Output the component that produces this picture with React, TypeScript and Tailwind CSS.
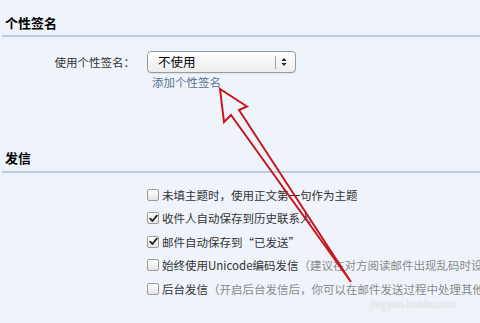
import React from "react";

const font = { fontFamily: '"Noto Sans CJK SC", "Noto Sans", sans-serif' };

function Check({ checked }: { checked?: boolean }) {
  return (
    <span className="w-[12px] h-[12px] rounded-[2px] border border-[#9c9c9c] bg-gradient-to-b from-white to-[#e4e4e4] flex items-center justify-center shrink-0">
      {checked && (
        <svg width="9" height="9" viewBox="0 0 9 9">
          <path d="M1.2 4.6 L3.4 7 L7.8 1.6" stroke="#222" strokeWidth="1.8" fill="none" strokeLinecap="round" strokeLinejoin="round" />
        </svg>
      )}
    </span>
  );
}

function Row({ checked, children }: { checked?: boolean; children: React.ReactNode }) {
  return (
    <div className="h-[23.5px] flex items-center pl-[147px] whitespace-nowrap">
      <Check checked={checked} />
      <span className="ml-[3px] text-[11.5px] leading-[16px] text-[#333]">{children}</span>
    </div>
  );
}

export default function App() {
  return (
    <div className="relative w-[480px] h-[323px] overflow-hidden bg-[#eff4fb]" style={font}>
      <div className="pt-[15px] pl-[5px] pb-[4px] text-[13px] font-bold leading-[16px] text-black">个性签名</div>
      <div className="ml-[2px] h-[2px] bg-[#b7cde4]" />
      <div className="mt-[14px] flex items-center">
        <div className="w-[135px] text-right text-[11.5px] leading-[16px] text-[#333]">使用个性签名：</div>
        <div className="ml-[12px] w-[149px] h-[22px] rounded-[4px] border border-[#9a9a9a] bg-gradient-to-b from-white to-[#ededed] flex items-center shadow-[0_1px_1px_rgba(0,0,0,0.08)]">
          <span className="ml-[10px] text-[12.5px] leading-[16px] text-black flex-1">不使用</span>
          <span className="w-px h-[13px] bg-[#a5a5a5]" />
          <svg className="ml-[5px] mr-[8px]" width="6" height="10" viewBox="0 0 6 10">
            <path d="M0.5 4 L3 1 L5.5 4 Z M0.5 6 L3 9 L5.5 6 Z" fill="#222" />
          </svg>
        </div>
      </div>
      <div className="mt-[1px] pl-[152px] text-[11.5px] leading-[16px] text-[#5a6f8e]">添加个性签名</div>

      <div className="mt-[60px] pl-[5px] pb-[5px] text-[13px] font-bold leading-[16px] text-black">发信</div>
      <div className="ml-[2px] h-[2px] bg-[#b7cde4]" />
      <div className="mt-[10px]">
        <Row>未填主题时，使用正文第一句作为主题</Row>
        <Row checked>收件人自动保存到历史联系人</Row>
        <Row checked>邮件自动保存到“已发送”</Row>
        <Row>
          始终使用Unicode编码发信<span className="text-[#8a8a8a]">（建议在对方阅读邮件出现乱码时设置）</span>
        </Row>
        <Row>
          后台发信<span className="text-[#8a8a8a]">（开启后台发信后，你可以在邮件发送过程中处理其他邮件）</span>
        </Row>
      </div>

      <div className="absolute left-[370px] top-[298px] text-[10px] leading-[12px] text-white/80 [text-shadow:0_0_1px_rgba(120,120,120,0.5)]">jingyan.baidu.com</div>

      <svg className="absolute left-0 top-0" width="480" height="323" viewBox="0 0 480 323">
        <path
          d="M220 89 L224 122 L231 115 L351 282 L239 110 L247 106.5 Z"
          fill="none"
          stroke="#c8161d"
          strokeWidth="2"
          strokeLinejoin="miter"
        />
      </svg>
    </div>
  );
}
